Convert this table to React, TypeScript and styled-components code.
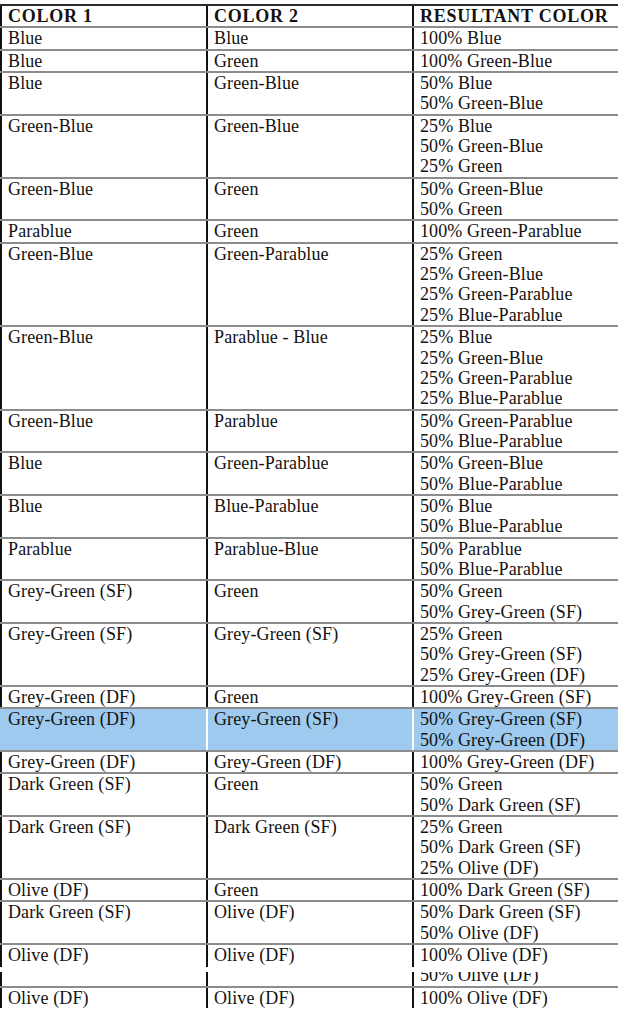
import React from "react";
import styled, { createGlobalStyle, css } from "styled-components";

const GlobalStyle = createGlobalStyle`
  html, body {
    margin: 0;
    padding: 0;
    background: #ffffff;
  }
  body {
    font-family: "Liberation Serif", "Times New Roman", serif;
    color: #141210;
  }
`;

const Page = styled.div`
  padding-top: 4px;
  width: 618px;
  overflow: hidden;
`;

const Table = styled.div`
  display: flex;
  flex-direction: column;
  width: 618px;
`;

const Row = styled.div<{ $header?: boolean; $highlight?: boolean; $last?: boolean }>`
  display: grid;
  grid-template-columns: 206px 206px 1fr;
  border-bottom: ${(p) => (p.$last ? "none" : "2px solid #8c8c8c")};
  background: ${(p) => (p.$highlight ? "#9dcaee" : "transparent")};
  ${(p) =>
    p.$header &&
    css`
      border-top: 2px solid #2a2a2a;
    `}
`;

const Cell = styled.div<{ $header?: boolean; $highlight?: boolean; $first?: boolean }>`
  border-left: 2px solid
    ${(p) => (p.$highlight ? (p.$first ? "transparent" : "#ffffff") : "#111111")};
  padding: 0 6px;
  font-size: 18px;
  line-height: 20.35px;
  white-space: nowrap;
  font-weight: ${(p) => (p.$header ? 700 : 400)};
  letter-spacing: ${(p) => (p.$header ? "0.75px" : "0.12px")};
`;

const Line = styled.div``;

const SplitCell = styled.div`
  display: flex;
  flex-direction: column;
  font-size: 18px;
  line-height: 20.35px;
  letter-spacing: 0.12px;
  white-space: nowrap;
`;

const Segment = styled.div<{ $h: number }>`
  height: ${(p) => p.$h}px;
  border-left: 2px solid #111111;
  padding: 0 6px;
  overflow: hidden;
`;

const Gap = styled.div`
  height: 5px;
`;

const ClippedLine = styled.div`
  margin-top: -7px;
`;

type RowData = [string, string, string[]];

const rows: RowData[] = [
  ["Blue", "Blue", ["100% Blue"]],
  ["Blue", "Green", ["100% Green-Blue"]],
  ["Blue", "Green-Blue", ["50% Blue", "50% Green-Blue"]],
  ["Green-Blue", "Green-Blue", ["25% Blue", "50% Green-Blue", "25% Green"]],
  ["Green-Blue", "Green", ["50% Green-Blue", "50% Green"]],
  ["Parablue", "Green", ["100% Green-Parablue"]],
  [
    "Green-Blue",
    "Green-Parablue",
    ["25% Green", "25% Green-Blue", "25% Green-Parablue", "25% Blue-Parablue"],
  ],
  [
    "Green-Blue",
    "Parablue - Blue",
    ["25% Blue", "25% Green-Blue", "25% Green-Parablue", "25% Blue-Parablue"],
  ],
  ["Green-Blue", "Parablue", ["50% Green-Parablue", "50% Blue-Parablue"]],
  ["Blue", "Green-Parablue", ["50% Green-Blue", "50% Blue-Parablue"]],
  ["Blue", "Blue-Parablue", ["50% Blue", "50% Blue-Parablue"]],
  ["Parablue", "Parablue-Blue", ["50% Parablue", "50% Blue-Parablue"]],
  ["Grey-Green (SF)", "Green", ["50% Green", "50% Grey-Green (SF)"]],
  [
    "Grey-Green (SF)",
    "Grey-Green (SF)",
    ["25% Green", "50% Grey-Green (SF)", "25% Grey-Green (DF)"],
  ],
  ["Grey-Green (DF)", "Green", ["100% Grey-Green (SF)"]],
  ["Grey-Green (DF)", "Grey-Green (SF)", ["50% Grey-Green (SF)", "50% Grey-Green (DF)"]],
  ["Grey-Green (DF)", "Grey-Green (DF)", ["100% Grey-Green (DF)"]],
  ["Dark Green (SF)", "Green", ["50% Green", "50% Dark Green (SF)"]],
  [
    "Dark Green (SF)",
    "Dark Green (SF)",
    ["25% Green", "50% Dark Green (SF)", "25% Olive (DF)"],
  ],
  ["Olive (DF)", "Green", ["100% Dark Green (SF)"]],
  ["Dark Green (SF)", "Olive (DF)", ["50% Dark Green (SF)", "50% Olive (DF)"]],
];

const HIGHLIGHT_INDEX = 15;

export default function App() {
  return (
    <>
      <GlobalStyle />
      <Page>
        <Table>
          <Row $header>
            <Cell $header $first>COLOR 1</Cell>
            <Cell $header>COLOR 2</Cell>
            <Cell $header>RESULTANT COLOR</Cell>
          </Row>
          {rows.map(([a, b, res], i) => {
            const hl = i === HIGHLIGHT_INDEX;
            return (
              <Row key={i} $highlight={hl}>
                <Cell $highlight={hl} $first>
                  {a}
                </Cell>
                <Cell $highlight={hl}>{b}</Cell>
                <Cell $highlight={hl}>
                  {res.map((r, j) => (
                    <Line key={j}>{r}</Line>
                  ))}
                </Cell>
              </Row>
            );
          })}
          <Row>
            <SplitCell>
              <Segment $h={22}>Olive (DF)</Segment>
              <Gap />
              <Segment $h={14} />
            </SplitCell>
            <SplitCell>
              <Segment $h={22}>Olive (DF)</Segment>
              <Gap />
              <Segment $h={14} />
            </SplitCell>
            <SplitCell>
              <Segment $h={22}>100% Olive (DF)</Segment>
              <Gap />
              <Segment $h={14}>
                <ClippedLine>50% Olive (DF)</ClippedLine>
              </Segment>
            </SplitCell>
          </Row>
          <Row $last>
            <Cell $first>Olive (DF)</Cell>
            <Cell>Olive (DF)</Cell>
            <Cell>100% Olive (DF)</Cell>
          </Row>
        </Table>
      </Page>
    </>
  );
}
